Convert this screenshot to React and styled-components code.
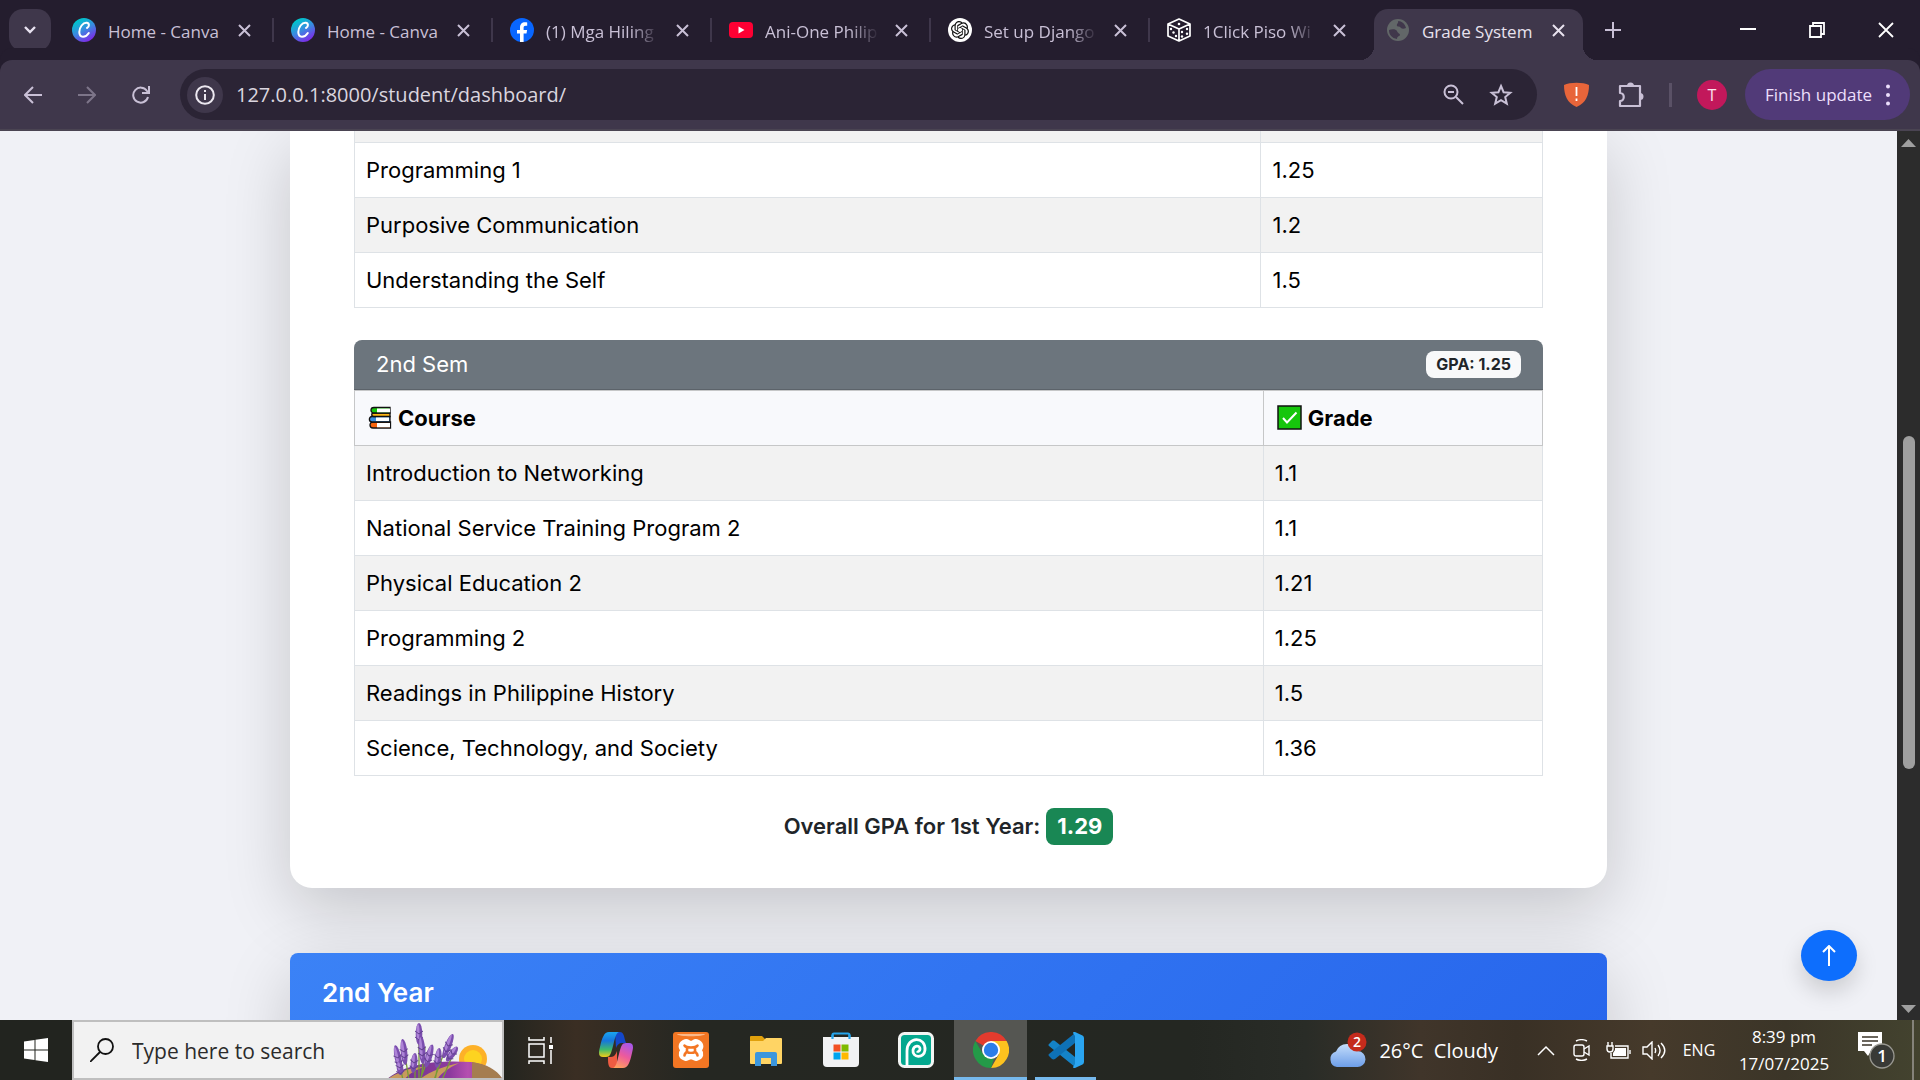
import React from "react";
import styled, { createGlobalStyle, css } from "styled-components";
import { SiOpenai } from "react-icons/si";

const ui = '"Open Sans", "Noto Sans", sans-serif';
const brand = 'Inter, "Open Sans", sans-serif';

const GlobalStyle = createGlobalStyle`
  * { box-sizing: border-box; }
  html, body { margin: 0; height: 100%; overflow: hidden; }
  button, input { font: inherit; color: inherit; margin: 0; padding: 0; border: 0; background: none; outline: 0; }
  button { display: flex; align-items: center; justify-content: center; flex: none; cursor: pointer; }
  svg { display: block; flex: none; }
`;

const Screen = styled.div`
  display: flex;
  flex-direction: column;
  height: 100vh;
  font-family: ${ui};
`;

/* ---------- browser frame ---------- */

const TabStrip = styled.header`
  display: flex;
  flex: none;
  height: 60px;
  padding-left: 9px;
  background: #241d2e;
  color: #c9c0d6;
`;

const TabSearch = styled.button`
  width: 42px;
  height: 42px;
  margin: 9px 4px 0 0;
  border-radius: 14px;
  background: #3f374b;
  color: #e8e2f0;
`;

const Tab = styled.div`
  display: flex;
  flex: none;
  align-items: center;
  width: 219px;
  padding-left: 17px;
  font-size: 17px;
  ${(p) =>
    p.$active &&
    css`
      position: relative;
      width: 209px;
      margin: 9px 0 0 5px;
      padding: 0 0 9px 12px;
      border-radius: 14px 14px 0 0;
      background: #3f374b;
      color: #e8e2ee;
      &::before,
      &::after {
        content: "";
        position: absolute;
        bottom: 0;
        width: 14px;
        height: 14px;
      }
      &::before {
        right: 100%;
        background: radial-gradient(circle at 0 0, transparent 14px, #3f374b 14px);
      }
      &::after {
        left: 100%;
        background: radial-gradient(circle at 100% 0, transparent 14px, #3f374b 14px);
      }
    `}
`;

const TabTitle = styled.button`
  justify-content: flex-start;
  width: 114px;
  height: 30px;
  padding-top: 2px;
  margin: 0 16px 0 12px;
  overflow: hidden;
  white-space: nowrap;
  ${(p) =>
    p.$fade &&
    css`
      mask-image: linear-gradient(90deg, #000 84px, transparent 114px);
    `}
`;

const TabSeparator = styled.span`
  width: 2px;
  height: 24px;
  margin-left: auto;
  background: #3f374b;
`;

const NewTab = styled.button`
  width: 44px;
  margin-left: 8px;
`;

const WindowControls = styled.div`
  display: flex;
  margin-left: auto;
  color: #fff;
`;

const WindowButton = styled.button`
  width: 69px;
`;

const Toolbar = styled.nav`
  display: flex;
  flex: none;
  align-items: center;
  height: 71px;
  padding: 0 10px 0 6px;
  border-bottom: 2px solid #4a4452;
  border-radius: 12px 12px 0 0;
  background: #3f374b;
  box-shadow: 0 -12px 0 #241d2e;
  color: #c9c0d6;
`;

const ToolButton = styled.button`
  width: ${(p) => p.$w || 54}px;
  height: 42px;
  opacity: ${(p) => (p.disabled ? 0.45 : 1)};
  color: inherit;
`;

const AddressBar = styled.div`
  display: flex;
  flex: 1;
  align-items: center;
  height: 51px;
  margin: 0 12px 0 12px;
  padding: 0 12px 0 7px;
  border-radius: 26px;
  background: #2b2435;
`;

const SiteInfo = styled.button`
  width: 36px;
  height: 36px;
  margin-right: 13px;
  border-radius: 50%;
  background: #3f374b;
  color: #ece8f0;
`;

const AddressInput = styled.input`
  flex: 1;
  min-width: 0;
  color: #dad5df;
  font-size: 20px;
  line-height: 30px;
`;

const ToolSeparator = styled.span`
  width: 3px;
  height: 24px;
  margin: 0 11px 0 10px;
  background: #5a5166;
`;

const Avatar = styled.button`
  width: 30px;
  height: 30px;
  margin: 0 18px 0 14px;
  border-radius: 50%;
  background: #c2185b;
  color: #fce4ee;
  font-size: 16px;
`;

const UpdateButton = styled.button`
  gap: 14px;
  width: 165px;
  height: 51px;
  border-radius: 26px;
  background: #513a78;
  color: #ecdffc;
  font-size: 17px;
  white-space: nowrap;
`;

/* ---------- page ---------- */

const Viewport = styled.div`
  position: relative;
  display: flex;
  flex: 1;
  min-height: 0;
`;

const Page = styled.main`
  flex: 1;
  min-width: 0;
  overflow: hidden;
  padding: 0 290px;
  background: #f0f1f6;
  color: #212529;
  font-family: ${brand};
  font-size: 22px;
`;

const YearCard = styled.section`
  padding: 0 64px 43px;
  border-radius: 0 0 22px 22px;
  background: #fff;
  box-shadow: 0 22px 66px rgba(0, 0, 0, 0.175);
`;

const Table = styled.table`
  width: 100%;
  border-collapse: collapse;
  table-layout: fixed;
  color: #000;
  line-height: 32px;
`;

const CourseCol = styled.col`
  width: ${(p) => p.$w}%;
`;

const Row = styled.tr`
  background: ${(p) => (p.$striped ? "#f2f2f2" : "#fff")};
`;

const Cell = styled.td`
  padding: 11px;
  border: 1px solid #dee2e6;
  overflow-wrap: anywhere;
`;

const ClippedCell = styled(Cell)`
  height: 11px;
  padding: 0;
  border-top: 0;
`;

const HeadCell = styled.th`
  padding: 11px 13px;
  border: 1px solid #c6c7c8;
  background: #f8f9fc;
  text-align: left;
  font-weight: 700;
`;

const HeadLabel = styled.span`
  display: flex;
  align-items: center;
  gap: 6px;
`;

const SemesterHeader = styled.div`
  display: flex;
  align-items: center;
  justify-content: space-between;
  height: 50px;
  margin-top: 32px;
  padding: 0 22px;
  border-bottom: 1px solid #5c636a;
  border-radius: 8px 8px 0 0;
  background: #6c757d;
  color: #fff;
`;

const Badge = styled.span`
  padding: 0 10px;
  border-radius: 8px;
  background: #f8f9fa;
  color: #212529;
  font-size: 16px;
  font-weight: 700;
  line-height: 27px;
`;

const Overall = styled.h2`
  display: flex;
  align-items: center;
  justify-content: center;
  gap: 6px;
  margin: 32px 0 0;
  font-size: 22px;
  font-weight: 600;
  line-height: 37px;
`;

const OverallBadge = styled.span`
  padding: 0 11px;
  border-radius: 8px;
  background: #198754;
  color: #fff;
  font-weight: 700;
`;

const NextYear = styled.section`
  height: 240px;
  margin-top: 65px;
  padding: 22px 32px;
  border-radius: 8px 8px 0 0;
  background: linear-gradient(135deg, #3b82f6, #2563eb);
  box-shadow: 0 22px 66px rgba(0, 0, 0, 0.175);
  color: #fff;
`;

const YearTitle = styled.h2`
  margin: 0;
  font-size: 26px;
  font-weight: 600;
  line-height: 36px;
`;

const ScrollTop = styled.button`
  position: absolute;
  right: 63px;
  bottom: 39px;
  width: 56px;
  height: 51px;
  border-radius: 50%;
  background: #0d6efd;
  color: #fff;
  box-shadow: 0 11px 22px rgba(0, 0, 0, 0.15);
`;

const Scrollbar = styled.div`
  display: flex;
  flex: none;
  flex-direction: column;
  align-items: center;
  width: 23px;
  padding: 8px 0 6px;
  background: #2c2c2c;
  color: #9f9f9f;
`;

const Track = styled.div`
  display: flex;
  flex: 1;
  flex-direction: column;
  align-items: center;
`;

const TrackSpace = styled.span`
  flex: ${(p) => p.$grow};
`;

const Thumb = styled.span`
  flex: 333;
  width: 12px;
  border-radius: 6px;
  background: #9f9f9f;
`;

/* ---------- taskbar ---------- */

const Taskbar = styled.footer`
  display: flex;
  flex: none;
  height: 60px;
  background: linear-gradient(90deg, #22241f 0, #22241f 26%, #3a2e23 30%, #252722 36%, #242722 62%, #292c27 68%, #40352a 74%, #393025 79%, #463a2b 86%, #3b3528 93%, #43432f 100%);
  color: #fff;
`;

const StartButton = styled.button`
  width: 72px;
`;

const SearchBox = styled.label`
  display: flex;
  flex: none;
  align-items: center;
  width: 432px;
  padding-left: 16px;
  border: 2px solid #bfbfbf;
  background: #f2f2f2;
  overflow: hidden;
  color: #111;
`;

const SearchInput = styled.input`
  flex: 1;
  min-width: 0;
  margin-left: 18px;
  padding-top: 2px;
  font-size: 21px;
  line-height: 30px;
  &::placeholder {
    color: #2b2b2b;
    opacity: 1;
  }
`;

const TaskIcons = styled.div`
  display: flex;
  gap: 2px;
`;

const TaskButton = styled.button`
  width: 73px;
  border-top: 3px solid transparent;
  border-bottom: 3px solid transparent;
  ${(p) =>
    p.$running &&
    css`
      background: linear-gradient(#76b9ed, #76b9ed) center bottom / 61px 3px no-repeat border-box;
    `}
  ${(p) =>
    p.$active &&
    css`
      border-top-color: #555652;
      border-bottom-color: #76b9ed;
      background: #555652;
    `}
`;

const Tray = styled.div`
  display: flex;
  align-items: center;
  margin-left: auto;
`;

const Weather = styled.button`
  gap: 12px;
  margin-right: 30px;
  font-size: 20px;
  white-space: pre;
`;

const TrayButton = styled.button`
  width: 36px;
  height: 60px;
`;

const Language = styled.button`
  width: 54px;
  height: 60px;
  font-size: 16px;
`;

const Clock = styled.button`
  flex-direction: column;
  width: 116px;
  font-size: 17px;
  line-height: 27px;
`;

const Notifications = styled.button`
  width: 60px;
  height: 60px;
  margin-left: 4px;
`;

const DesktopEdge = styled.span`
  width: 2px;
  height: 60px;
  margin: 0 6px 0 6px;
  background: #85837a;
`;

/* ---------- drawings ---------- */

const Stroke = ({ w = 24, h, vb = "0 0 24 24", sw = 2, children }) => (
  <svg width={w} height={h || w} viewBox={vb} fill="none" stroke="currentColor" strokeWidth={sw}>
    {children}
  </svg>
);

const CloseGlyph = () => (
  <Stroke w={13} vb="0 0 13 13" sw={2}><path d="M1 1l11 11M12 1L1 12" /></Stroke>
);

const CanvaLogo = ({ id }) => (
  <svg width="24" height="24" viewBox="0 0 24 24">
    <defs>
      <linearGradient id={id} x1="0.2" y1="0" x2="0.75" y2="1">
        <stop offset="0.1" stopColor="#00c4cc" />
        <stop offset="0.5" stopColor="#3a8ae0" />
        <stop offset="0.95" stopColor="#7d2ae8" />
      </linearGradient>
    </defs>
    <circle cx="12" cy="12" r="12" fill={`url(#${id})`} />
    <path d="M15 10c2.500-1 2.700-5-.3-5.300C11 4.300 7.300 9.500 7.300 14c0 6.500 6.500 5.800 9.500 1" fill="none" stroke="#fff" strokeWidth="2" strokeLinecap="round" />
  </svg>
);

const FacebookLogo = () => (
  <svg width="24" height="24" viewBox="0 0 24 24">
    <circle cx="12" cy="12" r="12" fill="#0866ff" />
    <path d="M10 24v-8.500H7V12h3v-2c0-4 2-5.700 5-5.700 1 0 1.700.1 2.200.2v3.200h-1.400c-1.700 0-2.200.8-2.200 2V12h3.500l-.6 3.500h-2.900V24z" fill="#fff" />
  </svg>
);

const YoutubeLogo = () => (
  <svg width="24" height="24" viewBox="0 0 24 24">
    <rect y="4" width="24" height="16" rx="4" fill="#ff0033" />
    <path d="M9.500 8.500v7l6-3.500z" fill="#fff" />
  </svg>
);

const OpenAiBadge = styled.span`
  display: flex;
  flex: none;
  align-items: center;
  justify-content: center;
  width: 24px;
  height: 24px;
  border-radius: 50%;
  background: #fff;
  color: #111;
`;

const DiceLogo = () => (
  <svg width="24" height="24" viewBox="0 0 24 24" fill="none" stroke="#fff" strokeWidth="1.700" strokeLinejoin="round">
    <path d="M12 1l11 5v12l-11 5-11-5V6zM1 6l11 5 11-5M12 11v12" />
    <g fill="#fff" stroke="none">
      <circle cx="12" cy="6" r="1.300" /><circle cx="4" cy="11" r="1.200" /><circle cx="6.500" cy="14.500" r="1.200" /><circle cx="9" cy="18" r="1.200" />
      <circle cx="15" cy="14" r="1.200" /><circle cx="20" cy="11" r="1.200" /><circle cx="15" cy="18.500" r="1.200" /><circle cx="20" cy="15.800" r="1.200" />
    </g>
  </svg>
);

const GlobeLogo = () => (
  <svg width="24" height="24" viewBox="0 0 24 24">
    <circle cx="12" cy="12" r="11" fill="#626768" />
    <path d="M3 12c3-1 7-1 8 1 1 3 3 2 3 4 0 1-3 1-3 4-5-1-8-4-8-9zM12 3c1 2-2 3-1 5 1 1 3 0 4 2 1 1 3 1 5 0-1-4-4-7-8-7z" fill="#40374b" />
  </svg>
);

const Books = () => (
  <svg width="24" height="24" viewBox="0 0 24 24" stroke="#111" strokeWidth="1.300">
    <path d="M22.500 16H5c-4 0-4 6 0 6h17.500z" fill="#f7630c" />
    <path d="M22 10.500H4c-3.500 0-3.500 5.500 0 5.500h18z" fill="#3a8fe0" />
    <path d="M22 7H6c-3 0-3 3.500 0 3.500h16z" fill="#fcb414" />
    <path d="M22 1.500H6C2 1.500 2 7 6 7h16z" fill="#16c60c" />
    <path d="M9 2.500h13v3.800H9zM8 11.500h13v3.500H8zM9 17h13v4.300H9z" fill="#fff" stroke="none" />
  </svg>
);

const CheckMark = () => (
  <svg width="25" height="25" viewBox="0 0 25 25">
    <rect x="1" y="1" width="23" height="23" fill="#16c60c" stroke="#111" strokeWidth="1.500" />
    <path d="M6 13l4 4.500 9.500-10" fill="none" stroke="#fff" strokeWidth="2" />
  </svg>
);

const Lavender = () => (
  <svg width="116" height="56" viewBox="0 0 116 56">
    <defs>
      <linearGradient id="field" x1="0" x2="1">
        <stop offset="0" stopColor="#6d348d" /><stop offset="0.55" stopColor="#8d3a9e" /><stop offset="0.7" stopColor="#b54fb0" /><stop offset="1" stopColor="#6a3880" />
      </linearGradient>
    </defs>
    <circle cx="87" cy="37" r="14" fill="#fdb128" />
    <circle cx="87" cy="37" r="9" fill="#fdd320" />
    <path d="M0 58C20 40 55 38 85 40c16 2 27 10 32 18z" fill="url(#field)" />
    <path d="M86 40c16 2 26 9 31 18H86z" fill="#a57d50" />
    <path d="M0 58c12-8 25-13 38-13-9 3-15 7-20 13zM33 58c8-7 22-13 40-17-12 6-19 11-22 17z" fill="#c79a5c" />
    <g stroke="#779b35" strokeWidth="1.300" fill="none">
      <path d="M33 10v48M18 27l5 31M39 25l-4 33M29 40v18M62 20L48 58M53 38l-4 20M68 30l-12 28M12 35l5 23M43 34L34 58" />
    </g>
    {[[33, 12, 0, 11], [18, 30, -6, 13], [36, 28, -4, 14], [12, 36, -12, 13], [28, 41, 6, 10], [43, 34, 16, 12], [62, 24, 22, 13], [52, 36, 8, 10], [66, 32, 38, 9], [14, 46, -6, 7]].map(([x, y, r, l]) => (
      <g key={`${x}-${y}`} transform={`rotate(${r} ${x} ${y})`}>
        <ellipse cx={x} cy={y} rx="3.300" ry={l} fill="#7b4eae" />
        <ellipse cx={x - 1} cy={y - 2} rx="1.500" ry={l - 3} fill="#ad83d6" />
        <path d={`M${x - 4} ${y - 3}l4 3 4-3M${x - 4} ${y + 3}l4 3 4-3`} stroke="#62418f" fill="none" />
      </g>
    ))}
  </svg>
);

const TaskViewIcon = () => (
  <Stroke w={26} h={28} vb="0 0 26 28" sw={1.5}>
    <path d="M1 8h15v13H1zM1 1v3h15V1M1 28v-3h15v3M23 1v6M23 14v14" />
    <path d="M21 9h4v4h-4z" fill="currentColor" stroke="none" />
  </Stroke>
);

const CopilotIcon = () => (
  <svg width="34" height="36" viewBox="0 0 34 36">
    <defs>
      <linearGradient id="copA" x1="0" y1="0" x2="0" y2="1">
        <stop offset="0" stopColor="#1aa5f0" /><stop offset="0.35" stopColor="#1675dd" /><stop offset="0.7" stopColor="#3fba6b" /><stop offset="1" stopColor="#f3cc18" />
      </linearGradient>
      <linearGradient id="copB" x1="0.7" y1="0" x2="0.3" y2="1">
        <stop offset="0" stopColor="#a957e8" /><stop offset="0.5" stopColor="#ed5a9c" /><stop offset="1" stopColor="#ff9f5e" />
      </linearGradient>
    </defs>
    <path d="M16 0h5c3 0 4 3 5 8l1 3h-4c-3 0-5 2-6 5z" fill="#1447c9" />
    <path d="M18 36h-5c-3 0-4-3-4-9v-2h3c3 0 5-3 6-6z" fill="#ef5c42" />
    <path d="M10 0h10c-3 1-4 6-6 14-2 8-3 11-7 11H4c-4 0-5-3-3-10C3 6 5 0 10 0z" fill="url(#copA)" />
    <path d="M24 36H14c3-1 4-6 6-14 2-8 3-11 7-11h3c4 0 5 3 3 10-2 9-4 15-9 15z" fill="url(#copB)" />
  </svg>
);

const XamppIcon = () => (
  <svg width="36" height="36" viewBox="0 0 36 36">
    <rect width="36" height="36" rx="3" fill="#f37623" />
    <path d="M4 2h28c0 3-28 3-28 0z" fill="#fab98b" />
    <path d="M12 8.500c3-1 4 1.500 6 1.500s3-2.500 6-1.500c6 2 6 7 3.500 9.500 2.500 3 2.500 7.500-3.500 9.500-3 1-4-1.500-6-1.500s-3 2.500-6 1.500c-6-2-6-6.500-3.500-9.500C6 15.500 6 10.500 12 8.500z" fill="#fff" stroke="#fff" strokeWidth="2.500" strokeLinejoin="round" />
    <path d="M11.500 13.500c1 1.500 3 2 6.500 2s5.500-.5 6.500-2M11.500 23.500c0-2 1.500-2.500 2.500-4v-3M24.500 23.500c0-2-1.500-2.500-2.500-4v-3M14 20c2 1 6 1 8 0" fill="none" stroke="#f37623" strokeWidth="2.600" strokeLinejoin="round" strokeLinecap="round" />
  </svg>
);

const FolderIcon = () => (
  <svg width="32" height="32" viewBox="0 -2 32 32">
    <path d="M0 1a1 1 0 011-1h11l3 3v3H0z" fill="#e0a00c" />
    <path d="M0 5h13l3-3h15a1 1 0 011 1v24a1 1 0 01-1 1H1a1 1 0 01-1-1z" fill="#ffd464" />
    <path d="M5 30V18a2 2 0 012-2h18a2 2 0 012 2v12h-6v-8H11v8z" fill="#3c96dc" />
  </svg>
);

const StoreIcon = () => (
  <svg width="36" height="36" viewBox="0 0 36 36">
    <path d="M9.500 8V3a1.500 1.500 0 011.500-1.500h14A1.500 1.500 0 0126.500 3v5" fill="none" stroke="#27a5ec" strokeWidth="2.200" />
    <path d="M0 5h36v26a4 4 0 01-4 4H4a4 4 0 01-4-4z" fill="#f1f2f4" />
    <path d="M9.500 3v4M26.500 3v4" stroke="#27a5ec" strokeWidth="2.200" />
    <path d="M10.500 12.500h7v7h-7z" fill="#f25022" /><path d="M18.500 12.500h7v7h-7z" fill="#7fba00" />
    <path d="M10.500 20.500h7v7h-7z" fill="#00a4ef" /><path d="M18.500 20.500h7v7h-7z" fill="#ffb900" />
  </svg>
);

const SwirlIcon = () => (
  <svg width="36" height="36" viewBox="0 0 36 36">
    <rect x="1.500" y="1.500" width="33" height="33" rx="5" fill="#03a88f" stroke="#f3f5f4" strokeWidth="3" />
    <path d="M9 34V19c0-15 19-15 18-1-1 9-13 8-12 0 1-5 7-5 7-1 0 2-2 3-3 2" fill="none" stroke="#fff" strokeWidth="2.800" />
  </svg>
);

const ChromeIcon = () => (
  <svg width="36" height="36" viewBox="0 0 36 36">
    <path d="M18 18L2.400 9A18 18 0 0133.600 9z" fill="#e33b2e" />
    <path d="M18 9h15.600A18 18 0 0118 36l7.800-13.500z" fill="#fcc21f" />
    <path d="M2.400 9l7.800 13.500L18 27l3-.5L18 36A18 18 0 012.400 9z" fill="#249a48" />
    <circle cx="18" cy="18" r="9" fill="#fff" />
    <circle cx="18" cy="18" r="7.200" fill="#2b7de9" />
  </svg>
);

const CodeIcon = () => (
  <svg width="36" height="36" viewBox="0 0 36 36">
    <path d="M1 12l3-3c1-.7 2-.5 3 0l20 16v10L1 14c-.7-.7-.7-1.300 0-2z" fill="#1483c8" />
    <path d="M1 24l3 3c1 .7 2 .5 3 0l20-16V1L1 22c-.7.700-.7 1.300 0 2z" fill="#0e71b6" />
    <path d="M27 0l7.500 3.500A3 3 0 0136 6v24a3 3 0 01-1.500 2.500L27 36c-1 .3-1.700 0-2-1l2-3V4l-2-3c.3-1 1-1.300 2-1z" fill="#2aa5f1" />
  </svg>
);

const CloudIcon = () => (
  <svg width="38" height="38" viewBox="0 0 38 38">
    <defs>
      <linearGradient id="cloud" x1="0" y1="0" x2="0" y2="1">
        <stop offset="0" stopColor="#c4ddfb" /><stop offset="1" stopColor="#6d9ee8" />
      </linearGradient>
    </defs>
    <path d="M8 36a8 8 0 01-1-15.500A12 12 0 0129 20a8 8 0 01-1 16z" fill="url(#cloud)" />
    <circle cx="28" cy="11" r="9.500" fill="#c42b1c" />
    <text x="28" y="16" textAnchor="middle" fontSize="14" fontWeight="600" fill="#fff">2</text>
  </svg>
);

const NoteIcon = () => (
  <svg width="38" height="38" viewBox="0 0 38 38">
    <path d="M1 1h24v19H14l-3 5-4-5H1z" fill="#fff" />
    <path d="M5 6h16M5 10h16M5 14h10" stroke="#3b3528" strokeWidth="1.300" />
    <circle cx="25" cy="25" r="12" fill="#393a36" stroke="#9a9992" strokeWidth="1.300" />
    <text x="25" y="31" textAnchor="middle" fontSize="17" fontWeight="600" fill="#fff">1</text>
  </svg>
);

/* ---------- data ---------- */

const tabs = [
  { title: "Home - Canva", icon: <CanvaLogo id="canva1" /> },
  { title: "Home - Canva", icon: <CanvaLogo id="canva2" /> },
  { title: "(1) Mga Hiling", icon: <FacebookLogo />, fade: true },
  { title: "Ani-One Philip", icon: <YoutubeLogo />, fade: true },
  { title: "Set up Django", icon: <OpenAiBadge><SiOpenai size={18} /></OpenAiBadge>, fade: true },
  { title: "1Click Piso Wi", icon: <DiceLogo />, fade: true, last: true },
];

const firstSem = [
  ["Programming 1", "1.25"],
  ["Purposive Communication", "1.2"],
  ["Understanding the Self", "1.5"],
];

const secondSem = [
  ["Introduction to Networking", "1.1"],
  ["National Service Training Program 2", "1.1"],
  ["Physical Education 2", "1.21"],
  ["Programming 2", "1.25"],
  ["Readings in Philippine History", "1.5"],
  ["Science, Technology, and Society", "1.36"],
];

const taskItems = [
  { name: "Task View", icon: <TaskViewIcon /> },
  { name: "Copilot", icon: <CopilotIcon /> },
  { name: "XAMPP", icon: <XamppIcon /> },
  { name: "File Explorer", icon: <FolderIcon /> },
  { name: "Store", icon: <StoreIcon /> },
  { name: "Photopea", icon: <SwirlIcon /> },
  { name: "Chrome", icon: <ChromeIcon />, active: true },
  { name: "Code", icon: <CodeIcon />, running: true },
];

const GradeRows = ({ rows, stripeFrom }) =>
  rows.map(([course, grade], i) => (
    <Row key={course} $striped={(i + stripeFrom) % 2 === 0}>
      <Cell>{course}</Cell>
      <Cell>{grade}</Cell>
    </Row>
  ));

export default function App() {
  return (
    <Screen>
      <GlobalStyle />
      <TabStrip>
        <TabSearch aria-label="Search tabs">
          <Stroke w={12} h={8} vb="0 0 12 8" sw={2.4}><path d="M1 1l5 5 5-5" /></Stroke>
        </TabSearch>
        {tabs.map((t, i) => (
          <Tab key={i}>
            {t.icon}
            <TabTitle $fade={t.fade}>{t.title}</TabTitle>
            <button aria-label="Close tab"><CloseGlyph /></button>
            {!t.last && <TabSeparator />}
          </Tab>
        ))}
        <Tab $active>
          <GlobeLogo />
          <TabTitle>Grade System</TabTitle>
          <button aria-label="Close tab"><CloseGlyph /></button>
        </Tab>
        <NewTab aria-label="New tab">
          <Stroke w={16} vb="0 0 16 16"><path d="M8 0v16M0 8h16" /></Stroke>
        </NewTab>
        <WindowControls>
          <WindowButton aria-label="Minimize"><Stroke w={16} vb="0 0 16 16" sw={2}><path d="M0 7h16" /></Stroke></WindowButton>
          <WindowButton aria-label="Restore"><Stroke w={16} vb="0 0 16 16" sw={1.8}><path d="M1 4h11v11H1zM4 4V1h11v11h-3" /></Stroke></WindowButton>
          <WindowButton aria-label="Close"><Stroke w={16} vb="0 0 16 16" sw={1.8}><path d="M1 1l14 14M15 1L1 15" /></Stroke></WindowButton>
        </WindowControls>
      </TabStrip>

      <Toolbar>
        <ToolButton aria-label="Back"><Stroke w={18} vb="0 0 18 18"><path d="M18 9H1M9 1L1 9l8 8" /></Stroke></ToolButton>
        <ToolButton aria-label="Forward" disabled><Stroke w={18} vb="0 0 18 18"><path d="M0 9h17M9 1l8 8-8 8" /></Stroke></ToolButton>
        <ToolButton aria-label="Reload"><Stroke w={18} vb="0 0 18 18"><path d="M16 11a7.500 7.500 0 11-1-6l2 2.500M17 0v7h-7" /></Stroke></ToolButton>
        <AddressBar>
          <SiteInfo aria-label="Site information">
            <Stroke w={20} vb="0 0 20 20"><circle cx="10" cy="10" r="8.800" /><path d="M10 9v6M10 5v2" /></Stroke>
          </SiteInfo>
          <AddressInput aria-label="Address" defaultValue="127.0.0.1:8000/student/dashboard/" />
          <ToolButton $w={48} aria-label="Zoom">
            <Stroke w={21} vb="0 0 21 21"><circle cx="8" cy="8" r="6.500" /><path d="M13 13l7 7M5 8h6" /></Stroke>
          </ToolButton>
          <ToolButton $w={48} aria-label="Bookmark">
            <Stroke w={24} vb="0 0 24 24"><path d="M12 3l2.600 6.200 6.700.5-5.100 4.400 1.600 6.500-5.800-3.500-5.800 3.500 1.600-6.500-5.100-4.400 6.700-.5z" /></Stroke>
          </ToolButton>
        </AddressBar>
        <ToolButton $w={54} aria-label="Security extension">
          <svg width="25" height="25" viewBox="0 0 25 25">
            <path d="M0 3C6 0 19 0 25 3c0 10-3 18-12.500 22C3 21 0 13 0 3z" fill="#e8653a" />
            <path d="M12.500 5v9M12.500 16.500v2.500" stroke="#fff" strokeWidth="1.800" />
          </svg>
        </ToolButton>
        <ToolButton $w={56} aria-label="Extensions">
          <Stroke w={26} vb="0 0 26 26" sw={2.2}>
            <path d="M2 4h20v20H2v-5c5 0 5-8 0-8z" strokeLinejoin="round" />
            <path d="M9 4a3.500 3.500 0 017 0zM22 11a3.500 3.500 0 010 7z" fill="currentColor" stroke="none" />
          </Stroke>
        </ToolButton>
        <ToolSeparator />
        <Avatar>T</Avatar>
        <UpdateButton>
          Finish update
          <svg width="4" height="22" viewBox="0 0 4 22" fill="currentColor"><circle cx="2" cy="2.500" r="2" /><circle cx="2" cy="11" r="2" /><circle cx="2" cy="19.500" r="2" /></svg>
        </UpdateButton>
      </Toolbar>

      <Viewport>
        <Page>
          <YearCard>
            <Table>
              <colgroup><CourseCol $w={76.3} /><col /></colgroup>
              <tbody>
                <Row $striped><ClippedCell /><ClippedCell /></Row>
                <GradeRows rows={firstSem} stripeFrom={1} />
              </tbody>
            </Table>
            <SemesterHeader>
              2nd Sem
              <Badge>GPA: 1.25</Badge>
            </SemesterHeader>
            <Table>
              <colgroup><CourseCol $w={76.5} /><col /></colgroup>
              <thead>
                <tr>
                  <HeadCell scope="col"><HeadLabel><Books />Course</HeadLabel></HeadCell>
                  <HeadCell scope="col"><HeadLabel><CheckMark />Grade</HeadLabel></HeadCell>
                </tr>
              </thead>
              <tbody><GradeRows rows={secondSem} stripeFrom={0} /></tbody>
            </Table>
            <Overall>Overall GPA for 1st Year: <OverallBadge>1.29</OverallBadge></Overall>
          </YearCard>
          <NextYear><YearTitle>2nd Year</YearTitle></NextYear>
        </Page>
        <Scrollbar>
          <svg width="15" height="9" viewBox="0 0 15 9" fill="currentColor"><path d="M7.500 0L15 8H0z" /></svg>
          <Track><TrackSpace $grow={288} /><Thumb /><TrackSpace $grow={236} /></Track>
          <svg width="15" height="9" viewBox="0 0 15 9" fill="currentColor"><path d="M0 0h15L7.500 8z" /></svg>
        </Scrollbar>
        <ScrollTop aria-label="Back to top">
          <Stroke w={14} h={21} vb="0 0 14 21" sw={2}><path d="M7 21V1M1 7l6-6 6 6" /></Stroke>
        </ScrollTop>
      </Viewport>

      <Taskbar>
        <StartButton aria-label="Start">
          <svg width="24" height="24" viewBox="0 0 24 24" fill="#fff"><path d="M0 3.500l10.500-1.500v9.500H0zM11.500 1.800L24 0v11.500H11.500zM0 12.500h10.500V22L0 20.500zM11.500 12.500H24V24l-12.500-1.800z" /></svg>
        </StartButton>
        <SearchBox>
          <Stroke w={24} vb="0 0 24 24" sw={1.8}><circle cx="15.500" cy="8.500" r="7.500" /><path d="M10 14L0 24" /></Stroke>
          <SearchInput aria-label="Search" placeholder="Type here to search" />
          <Lavender />
        </SearchBox>
        <TaskIcons>
          {taskItems.map((t) => (
            <TaskButton key={t.name} aria-label={t.name} $active={t.active} $running={t.running}>{t.icon}</TaskButton>
          ))}
        </TaskIcons>
        <Tray>
          <Weather><CloudIcon />26°C  Cloudy</Weather>
          <TrayButton aria-label="Hidden icons"><Stroke w={18} h={11} vb="0 0 18 11" sw={1.5}><path d="M1 10l8-8 8 8" /></Stroke></TrayButton>
          <TrayButton aria-label="Camera">
            <Stroke w={18} h={22} vb="0 0 18 22" sw={1.4}><rect x="1" y="6" width="10" height="11" rx="2" /><path d="M11 10l5-3v9l-5-3M3 2c4-2 7-2 11 0M3 20c4 2 7 2 11 0" /></Stroke>
          </TrayButton>
          <TrayButton aria-label="Battery">
            <Stroke w={25} h={17} vb="0 0 25 17" sw={1.4}><path d="M9 4h13v12H5v-5M24 8v4M1 4h6v3c0 4-6 4-6 0zM2 0v4M6 0v4" /><path d="M9 6h11v8H7v-3l2-3z" fill="currentColor" stroke="none" /></Stroke>
          </TrayButton>
          <TrayButton aria-label="Volume">
            <Stroke w={24} h={19} vb="0 0 24 19" sw={1.4}><path d="M1 6h4l5-5v17l-5-5H1zM13 7c1 2 1 3 0 5M16 4c3 4 3 7 0 11M19 2c5 5 5 10 0 15" /></Stroke>
          </TrayButton>
          <Language>ENG</Language>
          <Clock><span>8:39 pm</span><span>17/07/2025</span></Clock>
          <Notifications aria-label="Notifications"><NoteIcon /></Notifications>
          <DesktopEdge />
        </Tray>
      </Taskbar>
    </Screen>
  );
}
